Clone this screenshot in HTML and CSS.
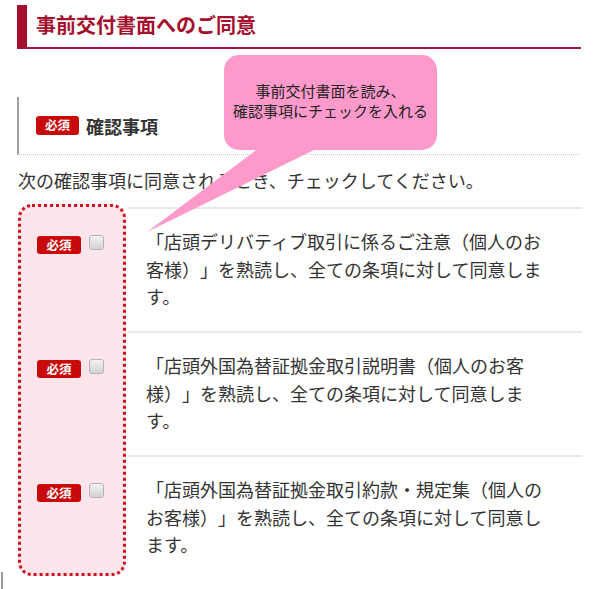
FILE: index.html
```html
<!DOCTYPE html>
<html lang="ja">
<head>
<meta charset="utf-8">
<title>事前交付書面へのご同意</title>
<link rel="stylesheet" href="styles.css">
</head>
<body>
<div class="page">
  <h1 class="title">事前交付書面へのご同意</h1>

  <div class="section-head">
    <span class="badge badge-lg">必須</span>
    <span class="section-title">確認事項</span>
  </div>

  <p class="lead">次の確認事項に同意されるとき、チェックしてください。</p>

  <div class="list">
    <div class="highlight"></div>
    <div class="row">
      <div class="row-check">
        <span class="badge">必須</span>
        <input type="checkbox" class="cb">
      </div>
      <div class="row-text">「店頭デリバティブ取引に係るご注意（個人のお<br>客様）」を熟読し、全ての条項に対して同意しま<br>す。</div>
    </div>
    <div class="row">
      <div class="row-check">
        <span class="badge">必須</span>
        <input type="checkbox" class="cb">
      </div>
      <div class="row-text">「店頭外国為替証拠金取引説明書（個人のお客<br>様）」を熟読し、全ての条項に対して同意しま<br>す。</div>
    </div>
    <div class="row">
      <div class="row-check">
        <span class="badge">必須</span>
        <input type="checkbox" class="cb">
      </div>
      <div class="row-text">「店頭外国為替証拠金取引約款・規定集（個人の<br>お客様）」を熟読し、全ての条項に対して同意し<br>ます。</div>
    </div>
  </div>

  <div class="callout">
    <p class="callout-text">事前交付書面を読み、<br>確認事項にチェックを入れる</p>
  </div>
  <svg class="callout-tail" width="200" height="100" viewBox="140 140 200 100" aria-hidden="true">
    <polygon points="259,148 318,148 147,232" fill="#fd9acb"/>
  </svg>
  <div class="edge-mark"></div>
</div>
</body>
</html>
```
FILE: styles.css
```css
html, body {
  margin: 0;
  padding: 0;
  background: #ffffff;
}

body {
  font-family: "Noto Sans CJK JP", "Noto Sans", "Liberation Sans", sans-serif;
  color: #333333;
  text-spacing-trim: space-all;
}

.page {
  position: relative;
  width: 600px;
  height: 589px;
  overflow: hidden;
}

.title {
  margin: 5px 19px 0 17px;
  padding: 0 0 0 9px;
  height: 42px;
  line-height: 40px;
  border-left: 10px solid #a50f2d;
  border-bottom: 2px solid #a3153a;
  font-size: 20px;
  font-weight: 700;
  color: #a50f2d;
}

.section-head {
  margin: 48px 20px 0 17px;
  height: 57px;
  border-left: 2px solid #a0a0a0;
  border-bottom: 1px dotted #c8c8c8;
  display: flex;
  align-items: center;
  padding-left: 17px;
  gap: 7px;
}

.badge {
  display: inline-flex;
  align-items: center;
  justify-content: center;
  width: 44px;
  height: 18px;
  border-radius: 3px;
  background: #c80a0a;
  color: #ffffff;
  font-size: 12.5px;
  font-weight: 700;
  line-height: 1;
}

.badge-lg {
  height: 19px;
  width: 43px;
}

.section-title {
  font-size: 18px;
  font-weight: 700;
  color: #333333;
}

.lead {
  margin: 11px 0 0 18px;
  font-size: 18px;
  line-height: 28px;
  color: #333333;
}

.list {
  position: relative;
  margin-top: 13px;
}

.highlight {
  position: absolute;
  left: 18px;
  top: -3px;
  width: 102px;
  height: 366px;
  border: 3px dotted #d0101c;
  border-radius: 14px;
  background: #fde5eb;
}

.row {
  position: relative;
  display: flex;
  height: 124px;
}

.row-check {
  width: 128px;
  flex: none;
  display: flex;
  align-items: flex-start;
  padding: 29px 0 0 37px;
  box-sizing: border-box;
  gap: 8px;
}

.cb {
  appearance: none;
  -webkit-appearance: none;
  margin: -1px 0 0 0;
  width: 15px;
  height: 15px;
  border: 1px solid #b4b4b4;
  border-radius: 3px;
  background: linear-gradient(#f2f2f2, #d2d2d2);
  box-sizing: border-box;
}

.row-text {
  flex: 1;
  margin-right: 18px;
  border-top: 2px solid #e8e8e8;
  padding: 19px 0 0 18px;
  font-size: 18px;
  line-height: 27.5px;
  color: #333333;
  white-space: nowrap;
}

.callout {
  position: absolute;
  left: 224px;
  top: 55px;
  width: 213px;
  height: 95px;
  border-radius: 15px;
  background: #fd9acb;
  display: flex;
  align-items: center;
  justify-content: center;
  z-index: 5;
}

.callout-text {
  margin: 0;
  padding-bottom: 4px;
  text-align: center;
  font-size: 15px;
  line-height: 20px;
  color: #222222;
}

.callout-tail {
  position: absolute;
  left: 140px;
  top: 140px;
  z-index: 5;
}

.edge-mark {
  position: absolute;
  left: 1px;
  top: 572px;
  width: 2px;
  height: 17px;
  background: #9a9a9a;
}
```
